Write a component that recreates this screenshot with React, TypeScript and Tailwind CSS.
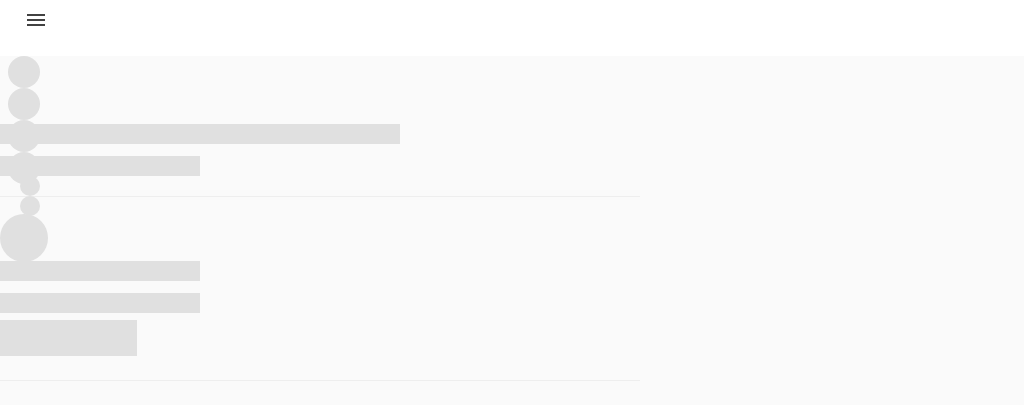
export default function App() {
  return (
    <div className="min-h-[405px] bg-[#fafafa] font-['Roboto',sans-serif]">
      <header className="flex h-14 items-center bg-white px-6">
        <button className="-mt-4 flex h-6 w-6 items-center justify-center text-[#424242]" aria-label="menu">
          <svg width="24" height="24" viewBox="0 0 24 24" fill="currentColor">
            <path d="M3 18h18v-2H3v2zm0-5h18v-2H3v2zm0-7v2h18V6H3z" />
          </svg>
        </button>
      </header>

      <main className="w-[640px]">
        {/* first skeleton block */}
        <section className="grid border-b border-[#eeeeee]">
          <div className="[grid-area:1/1] flex flex-col pt-[68px] pb-5">
            <div className="h-5 w-[400px] bg-[#e0e0e0]"></div>
            <div className="mt-3 h-5 w-[200px] bg-[#e0e0e0]"></div>
          </div>
          <div className="[grid-area:1/1] z-10 flex h-0 flex-col overflow-visible pl-2">
            <div className="h-8 w-8 shrink-0 rounded-full bg-[#e0e0e0]"></div>
            <div className="h-8 w-8 shrink-0 rounded-full bg-[#e0e0e0]"></div>
            <div className="h-8 w-8 shrink-0 rounded-full bg-[#e0e0e0]"></div>
            <div className="h-8 w-8 shrink-0 rounded-full bg-[#e0e0e0]"></div>
            <div className="-mt-2 ml-3 h-5 w-5 shrink-0 rounded-full bg-[#e0e0e0]"></div>
            <div className="ml-3 h-5 w-5 shrink-0 rounded-full bg-[#e0e0e0]"></div>
          </div>
        </section>

        {/* second skeleton block */}
        <section className="flex flex-col border-b border-[#eeeeee] pt-[17px] pb-6">
          <div className="h-12 w-12 rounded-full bg-[#e0e0e0]"></div>
          <div className="-mt-px h-5 w-[200px] bg-[#e0e0e0]"></div>
          <div className="mt-3 h-5 w-[200px] bg-[#e0e0e0]"></div>
          <div className="mt-[7px] h-9 w-[137px] bg-[#e0e0e0]"></div>
        </section>
      </main>
    </div>
  );
}
